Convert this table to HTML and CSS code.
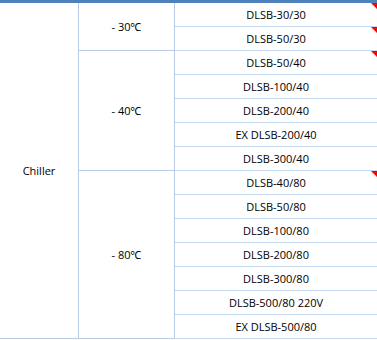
FILE: index.html
```html
<!DOCTYPE html>
<html>
<head>
<meta charset="utf-8">
<link rel="stylesheet" href="styles.css">
</head>
<body>
<table class="grid">
  <tbody>
    <tr>
      <td class="cat" rowspan="14">Chiller</td>
      <td class="temp" rowspan="2">- 30℃</td>
      <td class="model flag">DLSB-30/30</td>
    </tr>
    <tr><td class="model flag">DLSB-50/30</td></tr>
    <tr>
      <td class="temp" rowspan="5">- 40℃</td>
      <td class="model flag">DLSB-50/40</td>
    </tr>
    <tr><td class="model">DLSB-100/40</td></tr>
    <tr><td class="model">DLSB-200/40</td></tr>
    <tr><td class="model">EX DLSB-200/40</td></tr>
    <tr><td class="model">DLSB-300/40</td></tr>
    <tr>
      <td class="temp" rowspan="7">- 80℃</td>
      <td class="model flag">DLSB-40/80</td>
    </tr>
    <tr><td class="model">DLSB-50/80</td></tr>
    <tr><td class="model">DLSB-100/80</td></tr>
    <tr><td class="model">DLSB-200/80</td></tr>
    <tr><td class="model">DLSB-300/80</td></tr>
    <tr><td class="model">DLSB-500/80 220V</td></tr>
    <tr><td class="model">EX DLSB-500/80</td></tr>
  </tbody>
</table>
</body>
</html>
```
FILE: styles.css
```css
html, body {
  margin: 0;
  padding: 0;
  background: #ffffff;
}
.grid {
  border-collapse: collapse;
  width: 377px;
  table-layout: fixed;
  border-top: 3px solid #4f81bd;
  font-family: "Open Sans", "Noto Sans", sans-serif;
  font-size: 11px;
  color: #000;
}
.grid td {
  padding: 0;
  height: 23px;
  line-height: 23px;
  text-align: center;
  vertical-align: middle;
  white-space: nowrap;
}
.cat {
  width: 78px;
  border-right: 1px solid #b8cce4;
  border-bottom: 1px solid #b8cce4;
}
.temp {
  width: 95px;
  border-right: 1px solid #b8cce4;
  border-bottom: 1px solid #b8cce4;
}
.model {
  border-bottom: 1px solid #c5d9f1;
  position: relative;
}
.flag::after {
  content: "";
  position: absolute;
  top: 0;
  right: 0;
  border-top: 6px solid #ff0000;
  border-left: 6px solid transparent;
}
```
